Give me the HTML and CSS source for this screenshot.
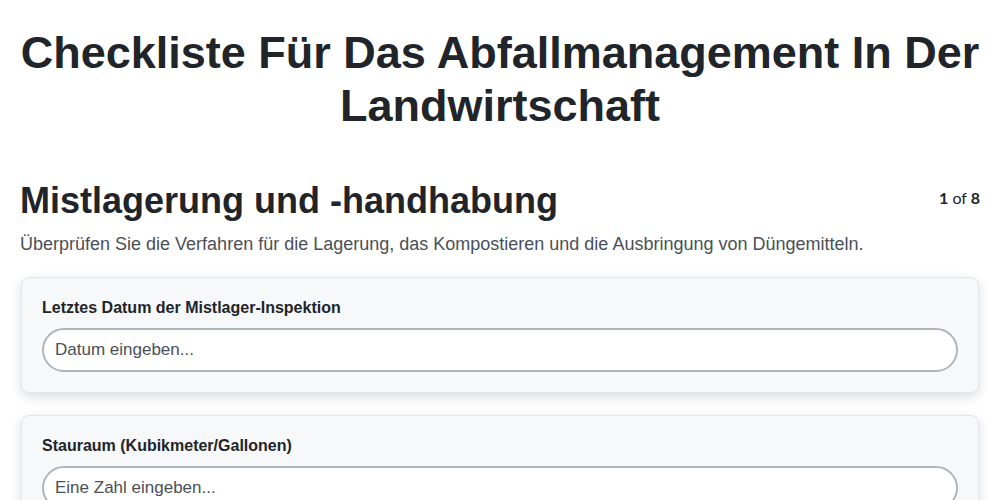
FILE: index.html
```html
<!DOCTYPE html>
<html lang="de">
<head>
<meta charset="utf-8">
<title>Checkliste</title>
<link rel="stylesheet" href="styles.css">
</head>
<body>
<main class="page">
  <h1 class="title">Checkliste Für Das Abfallmanagement In Der Landwirtschaft</h1>
  <section class="section">
    <div class="section-head">
      <h2 class="section-title">Mistlagerung und -handhabung</h2>
      <div class="pager"><b>1</b> of <b>8</b></div>
    </div>
    <p class="section-desc">Überprüfen Sie die Verfahren für die Lagerung, das Kompostieren und die Ausbringung von Düngemitteln.</p>
    <div class="cards">
      <div class="card">
        <label class="label">Letztes Datum der Mistlager-Inspektion</label>
        <input class="input" type="text" placeholder="Datum eingeben...">
      </div>
      <div class="card">
        <label class="label">Stauraum (Kubikmeter/Gallonen)</label>
        <input class="input" type="text" placeholder="Eine Zahl eingeben...">
      </div>
    </div>
  </section>
</main>
</body>
</html>
```

FILE: styles.css
```css
* { box-sizing: border-box; }
html, body { margin: 0; padding: 0; background: #ffffff; }
body {
  font-family: "Liberation Sans", Arial, sans-serif;
  color: #212529;
}
.page { padding: 26px 20px 20px 20px; }
.title {
  margin: 0;
  text-align: center;
  font-size: 45px;
  line-height: 53px;
  font-weight: 700;
  color: #212529;
}
.section { margin-top: 48px; }
.section-head {
  display: flex;
  justify-content: space-between;
  align-items: flex-start;
}
.section-title {
  margin: 0;
  font-size: 36px;
  line-height: 42px;
  font-weight: 700;
  color: #212529;
}
.pager {
  font-family: Lato, "Liberation Sans", sans-serif;
  font-size: 16px;
  color: #212529;
  padding-top: 8px;
}
.section-desc {
  margin: 10px 0 0 0;
  font-size: 18px;
  line-height: 24px;
  color: #495057;
}
.cards {
  margin-top: 21px;
  display: flex;
  flex-direction: column;
  gap: 22px;
  padding: 0 1px;
}
.card {
  background: #f7f8fa;
  border: 1px solid #e3e6ea;
  border-radius: 8px;
  box-shadow: 0 4px 12px rgba(0,0,0,0.14);
  padding: 20px 20px 20px 20px;
}
.label {
  display: block;
  font-size: 16px;
  font-weight: 700;
  line-height: 20px;
  color: #212529;
  margin-bottom: 10px;
}
.input {
  display: block;
  width: 100%;
  height: 44px;
  border: 2px solid #adb5bd;
  border-radius: 22px;
  background: #ffffff;
  padding: 0 11px;
  font-family: "Liberation Sans", Arial, sans-serif;
  font-size: 17px;
  color: #212529;
  outline: none;
}
.input::placeholder { color: #495057; opacity: 1; }
```
